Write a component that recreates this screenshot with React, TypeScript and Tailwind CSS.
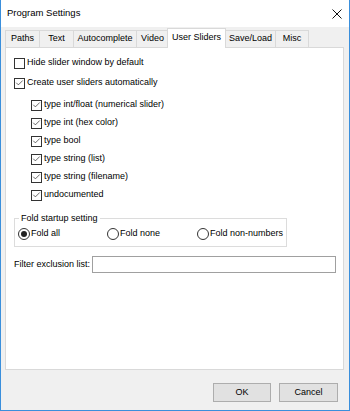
import { Check } from 'lucide-react';

const tabs = [
  { label: 'Paths', w: 'w-[35px]' },
  { label: 'Text', w: 'w-[35px]' },
  { label: 'Autocomplete', w: 'w-[64px]' },
  { label: 'Video', w: 'w-[33px]' },
  { label: 'User Sliders', w: 'w-[59px]', active: true },
  { label: 'Save/Load', w: 'w-[51px]' },
  { label: 'Misc', w: 'w-[34px]' },
];

const sliderTypes = [
  'type int/float (numerical slider)',
  'type int (hex color)',
  'type bool',
  'type string (list)',
  'type string (filename)',
  'undocumented',
];

function CheckBox({ checked, label }: { checked?: boolean; label: string }) {
  return (
    <label className="flex items-center h-[18px]">
      <span className="w-[11px] h-[11px] border border-[#333333] bg-white flex items-center justify-center shrink-0">
        {checked && <Check className="w-[10px] h-[10px] text-[#222222]" strokeWidth={1.8} />}
      </span>
      <span className="ml-[2px]">{label}</span>
    </label>
  );
}

function Radio({ checked, label }: { checked?: boolean; label: string }) {
  return (
    <label className="flex items-center h-[18px]">
      <span className="w-[12px] h-[12px] rounded-full border border-[#333333] bg-white flex items-center justify-center shrink-0">
        {checked && <span className="w-[6px] h-[6px] rounded-full bg-[#222222]" />}
      </span>
      <span className="ml-[1px]">{label}</span>
    </label>
  );
}

export default function App() {
  return (
    <div className="w-[350px] h-[411px] bg-[#f0f0f0] border-x border-b border-[#3a8fdc] flex flex-col text-[9px] text-black font-['Liberation_Sans',Arial,sans-serif]">
      {/* title bar */}
      <div className="h-[27px] bg-white flex items-center justify-between pl-[6px] pr-[6px] shrink-0">
        <span className="text-[9.5px]">Program Settings</span>
        <svg width="10" height="10" viewBox="0 0 10 10" className="mr-[1px]">
          <path d="M0.5 0.5 L9.5 9.5 M9.5 0.5 L0.5 9.5" stroke="#111" strokeWidth="1" />
        </svg>
      </div>

      <div className="pl-[4px] pr-[5px] pt-[1px]">
        <div className="flex items-end h-[20px] -mb-px relative z-10">
          {tabs.map((t, i) =>
            t.active ? (
              <div
                key={t.label}
                className={`${t.w} h-[20px] -ml-[2px] bg-white border-x border-t border-[#d9d9d9] flex items-center justify-center pb-[2px]`}
              >
                {t.label}
              </div>
            ) : (
              <div
                key={t.label}
                className={`${t.w} h-[17px] mb-px ${i > 0 ? '-ml-px' : ''} bg-[#f0f0f0] border-x border-t border-[#d9d9d9] flex items-center justify-center`}
              >
                {t.label}
              </div>
            )
          )}
        </div>

        <div className="h-[323px] bg-white border border-[#d9d9d9] pl-[8px] pt-[6px]">
          <CheckBox label="Hide slider window by default" />
          <div className="mt-[2px]">
            <CheckBox checked label="Create user sliders automatically" />
          </div>
          <div className="ml-[17px] mt-[4px]">
            {sliderTypes.map(s => (
              <CheckBox key={s} checked label={s} />
            ))}
          </div>

          <fieldset className="w-[273px] h-[34px] mt-[9px] border border-[#dcdcdc] px-[3px]">
            <legend className="px-[2px] ml-[1px] leading-[11px]">Fold startup setting</legend>
            <div className="flex items-center mt-[1px]">
              <div className="w-[89px]"><Radio checked label="Fold all" /></div>
              <div className="w-[90px]"><Radio label="Fold none" /></div>
              <Radio label="Fold non-numbers" />
            </div>
          </fieldset>

          <div className="flex items-center mt-[9px]">
            <span className="w-[78px]">Filter exclusion list:</span>
            <div className="w-[244px] h-[17px] border border-[#a0a0a0] bg-white" />
          </div>
        </div>
      </div>

      <div className="flex justify-end gap-[8px] pr-[11px] mt-[13px]">
        <button className="w-[58px] h-[19px] bg-[#e1e1e1] border border-[#adadad] text-[9px]">OK</button>
        <button className="w-[59px] h-[19px] bg-[#e1e1e1] border border-[#adadad] text-[9px]">Cancel</button>
      </div>
    </div>
  );
}
